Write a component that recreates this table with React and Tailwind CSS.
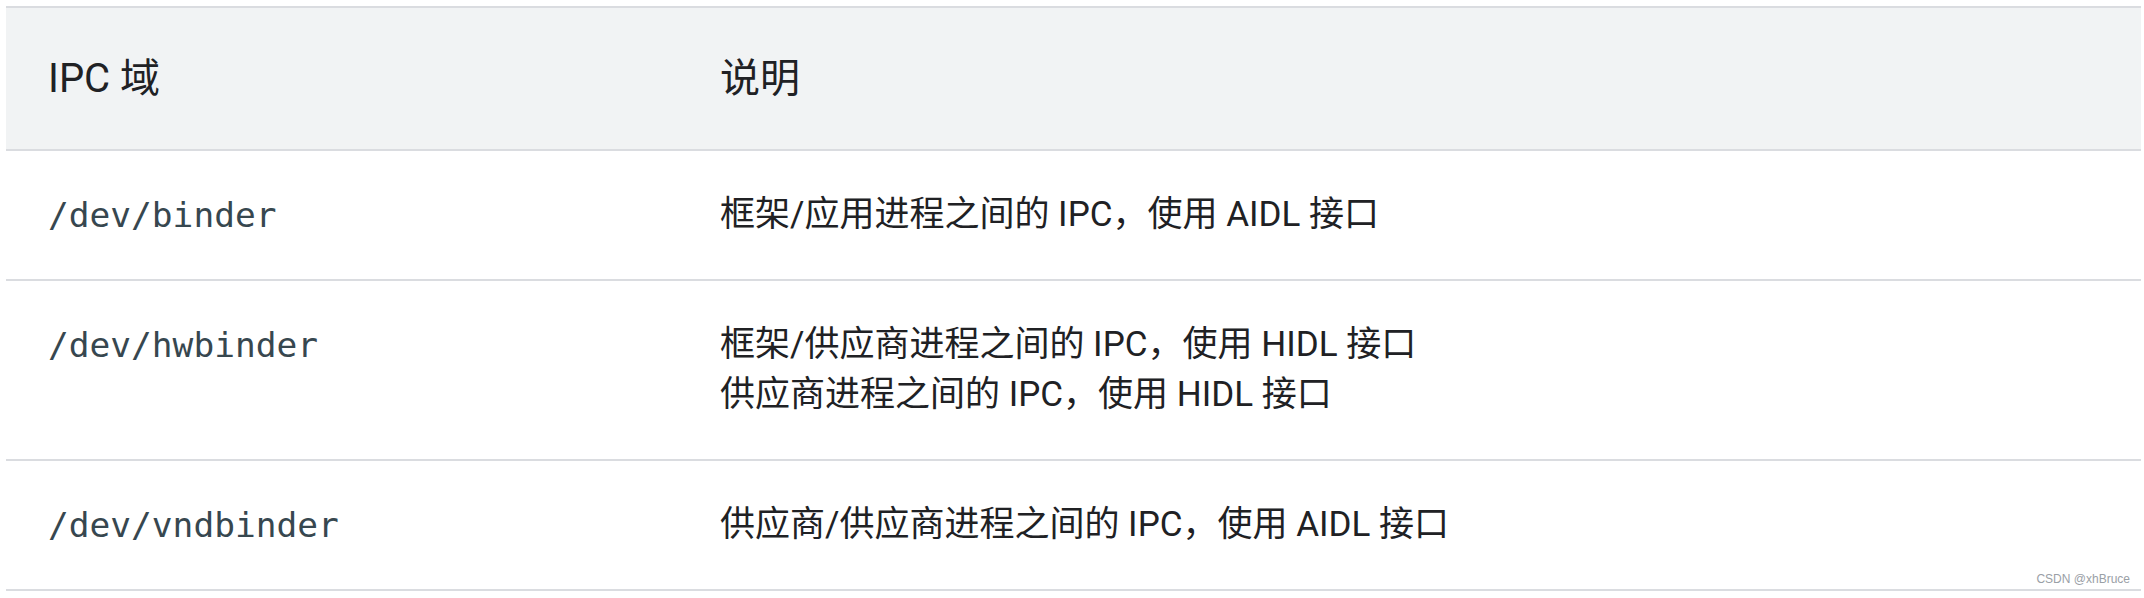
import React from 'react';

const rows = [
  { domain: '/dev/binder', desc: ['框架/应用进程之间的 IPC，使用 AIDL 接口'] },
  {
    domain: '/dev/hwbinder',
    desc: ['框架/供应商进程之间的 IPC，使用 HIDL 接口', '供应商进程之间的 IPC，使用 HIDL 接口'],
  },
  { domain: '/dev/vndbinder', desc: ['供应商/供应商进程之间的 IPC，使用 AIDL 接口'] },
];

const sans = "font-['Roboto','Noto_Sans_CJK_SC',sans-serif]";

const App = () => {
  return (
    <div className="relative w-[2144px] h-[598px] bg-white pt-[6px] pl-[6px]">
      <div className={`w-[2135px] border-t-[2px] border-[#dadce0] ${sans}`}>
        {/* Header */}
        <div className="flex bg-[#f1f3f4] border-b-[2px] border-[#dadce0] h-[143px] items-center text-[40px] text-[#202124]">
          <div className="w-[714px] pl-[42px]">IPC 域</div>
          <div className="flex-1">说明</div>
        </div>

        {/* Rows */}
        {rows.map((row) => (
          <div
            key={row.domain}
            className="flex border-b-[2px] border-[#dadce0] py-[39px] text-[35px] leading-[50px]"
          >
            <div className="w-[714px] pl-[42px] font-['DejaVu_Sans_Mono',monospace] text-[34.5px] text-[#37474f]">
              {row.domain}
            </div>
            <div className="flex-1 text-[#202124]">
              {row.desc.map((line, i) => (
                <div key={i}>{line}</div>
              ))}
            </div>
          </div>
        ))}
      </div>

      <span className="absolute right-[14px] bottom-[10px] font-['Liberation_Sans',sans-serif] text-[12px] text-[#9aa0a6]">
        CSDN @xhBruce
      </span>
    </div>
  );
};

export default App;
